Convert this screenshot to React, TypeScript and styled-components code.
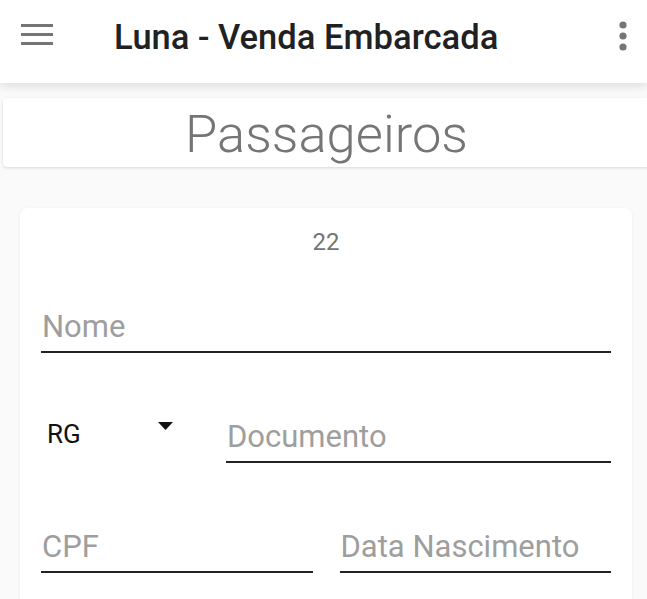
import React from "react";
import styled, { createGlobalStyle } from "styled-components";

const GlobalStyle = createGlobalStyle`
  html, body { margin: 0; padding: 0; }
  body {
    background: #fafafa;
    font-family: Roboto, "Noto Sans", Arial, sans-serif;
    overflow: hidden;
  }
`;

const Page = styled.div`
  width: 647px;
  height: 599px;
  overflow: hidden;
  background: #fafafa;
`;

const AppBar = styled.header`
  position: relative;
  z-index: 1;
  height: 83px;
  background: #fff;
  box-shadow: 0 3px 10px rgba(0, 0, 0, 0.12);
  display: flex;
  align-items: flex-start;
`;

const MenuButton = styled.div`
  margin: 24px 0 0 21px;
  width: 32px;
  height: 21px;
  display: flex;
`;

const Title = styled.h1`
  margin: 17px 0 0 61px;
  font-family: "Roboto Medium", Roboto, "Noto Sans", Arial, sans-serif;
  font-size: 34.5px;
  line-height: 40px;
  font-weight: 500;
  color: #212121;
  flex: 1;
`;

const MoreButton = styled.div`
  margin: 21px 19px 0 0;
  width: 10px;
  height: 30px;
  display: flex;
`;

const Content = styled.main`
  padding: 15px 0 0 3px;
`;

const HeadingCard = styled.div`
  width: 647px;
  height: 69px;
  box-sizing: border-box;
  padding-top: 4px;
  background: #fff;
  border-radius: 4px;
  box-shadow: 0 1px 3px rgba(0, 0, 0, 0.14);
  text-align: center;
  font-size: 52.5px;
  line-height: 65px;
  font-weight: 300;
  color: #757575;
`;

const FormCard = styled.section`
  margin: 41px 0 0 17px;
  width: 612px;
  box-sizing: border-box;
  padding: 20px 21px 40px 21px;
  background: #fff;
  border-radius: 8px;
  box-shadow: 0 1px 4px rgba(0, 0, 0, 0.05);
  display: flex;
  flex-direction: column;
`;

const Counter = styled.div`
  text-align: center;
  font-size: 24px;
  line-height: 28px;
  color: #757575;
`;

const Row = styled.div<{ $top: number }>`
  margin-top: ${(p) => p.$top}px;
  display: flex;
  gap: 27px;
`;

const Field = styled.div`
  flex: 1;
  min-width: 0;
  padding: 0 0 6px 1px;
  font-size: 31px;
  line-height: 36px;
  color: #9e9e9e;
  border-bottom: 2px solid #222;
  white-space: nowrap;
`;

const Select = styled.div`
  width: 164px;
  padding: 0 0 0 6px;
  display: flex;
  align-items: flex-start;
  font-size: 26px;
  line-height: 30px;
  color: #111;
`;

const SelectValue = styled.span`
  flex: 1;
`;

const Caret = styled.div`
  margin: 3px 38px 0 0;
  width: 15px;
  height: 8px;
  display: flex;
`;

const DocRow = styled.div`
  margin-top: 66px;
  display: flex;
  gap: 15px;
`;

export default function App() {
  return (
    <>
      <GlobalStyle />
      <Page>
        <AppBar>
          <MenuButton>
            <svg width="32" height="21" viewBox="0 0 32 21">
              <rect x="0" y="0" width="32" height="3" fill="#757575" />
              <rect x="0" y="9" width="32" height="3" fill="#757575" />
              <rect x="0" y="18" width="32" height="3" fill="#757575" />
            </svg>
          </MenuButton>
          <Title>Luna - Venda Embarcada</Title>
          <MoreButton>
            <svg width="10" height="30" viewBox="0 0 10 30">
              <circle cx="5" cy="4" r="3.6" fill="#757575" />
              <circle cx="5" cy="15" r="3.6" fill="#757575" />
              <circle cx="5" cy="26" r="3.6" fill="#757575" />
            </svg>
          </MoreButton>
        </AppBar>
        <Content>
          <HeadingCard>Passageiros</HeadingCard>
          <FormCard>
            <Counter>22</Counter>
            <Row $top={53}>
              <Field>Nome</Field>
            </Row>
            <DocRow>
              <Select>
                <SelectValue>RG</SelectValue>
                <Caret>
                  <svg width="15" height="8" viewBox="0 0 15 8">
                    <path d="M0 0 L15 0 L7.5 8 Z" fill="#111" />
                  </svg>
                </Caret>
              </Select>
              <Field>Documento</Field>
            </DocRow>
            <Row $top={66}>
              <Field>CPF</Field>
              <Field>Data Nascimento</Field>
            </Row>
          </FormCard>
        </Content>
      </Page>
    </>
  );
}
